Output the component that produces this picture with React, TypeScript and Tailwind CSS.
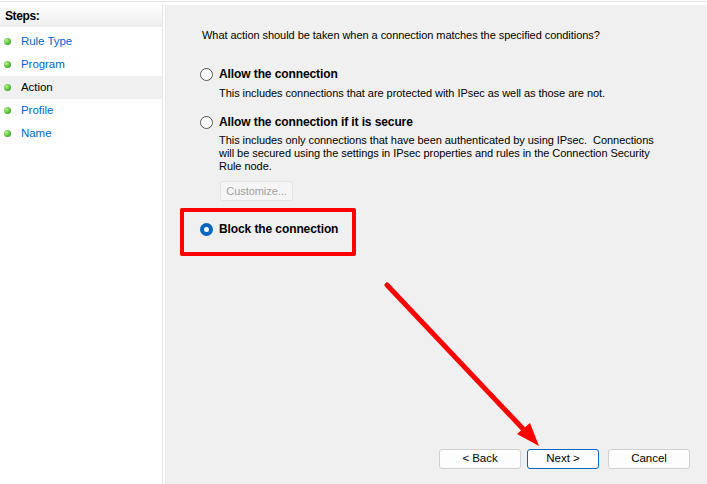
const steps = [
  { label: 'Rule Type', active: false },
  { label: 'Program', active: false },
  { label: 'Action', active: true },
  { label: 'Profile', active: false },
  { label: 'Name', active: false },
];

const Dot = () => (
  <span className="block w-[7px] h-[7px] rounded-full bg-[radial-gradient(circle_at_35%_35%,#b8f08a,#3fae2a_70%)]" />
);

const Radio = ({ checked }: { checked?: boolean }) =>
  checked ? (
    <span className="flex items-center justify-center w-[13px] h-[13px] rounded-full bg-[#0067c0]">
      <span className="block w-[5px] h-[5px] rounded-full bg-white" />
    </span>
  ) : (
    <span className="block w-[13px] h-[13px] rounded-full border border-[#555] bg-white" />
  );

export default function App() {
  return (
    <div className="relative w-[707px] h-[484px] overflow-hidden bg-white text-[11px] tracking-[-0.05px] font-['Liberation_Sans',Arial,sans-serif] text-black">
      <div className="h-[4px] border-t border-[#e6e6e6] mt-[1px]" />
      <div className="flex h-[479px]">
        {/* left steps panel */}
        <div className="w-[163px] border-r border-[#e3e3e3] bg-white">
          <div className="h-[22px] flex items-center pl-[5px] font-bold text-[12px] bg-gradient-to-b from-white to-[#ededed] tracking-[-0.4px]">
            Steps:
          </div>
          <div className="pt-[3px]">
            {steps.map((s) => (
              <div
                key={s.label}
                className={`h-[23px] flex items-center text-[11.5px] ${s.active ? 'bg-[#f0f0f0] text-black' : 'text-[#0066cc]'}`}
              >
                <span className="w-[21px] pl-[4px] flex items-center">
                  <Dot />
                </span>
                {s.label}
              </div>
            ))}
          </div>
        </div>
        <div className="w-[2px] bg-white" />
        {/* content */}
        <div className="flex-1 bg-[#f0f0f0] border-l border-[#e6e6e6] flex flex-col">
          <p className="pl-[36px] pt-[23px] leading-[15px]">
            What action should be taken when a connection matches the specified conditions?
          </p>

          <div className="pl-[34px]">
            <div className="flex items-center h-[16px] mt-[23px]">
              <span className="w-[19px]"><Radio /></span>
              <span className="font-bold text-[12px] tracking-[-0.1px]">Allow the connection</span>
            </div>
            <p className="pl-[19px] mt-[5px] leading-[13px]">
              This includes connections that are protected with IPsec as well as those are not.
            </p>

            <div className="flex items-center h-[16px] mt-[14px]">
              <span className="w-[19px]"><Radio /></span>
              <span className="font-bold text-[12px] tracking-[-0.1px]">Allow the connection if it is secure</span>
            </div>
            <p className="pl-[19px] mt-[4px] leading-[13px] w-[458px]">
              This includes only connections that have been authenticated by using IPsec.&nbsp; Connections will be secured using the settings in IPsec properties and rules in the Connection Security Rule node.
            </p>
            <div className="pl-[20px] mt-[8px]">
              <button className="w-[73px] h-[20px] rounded-[3px] border border-[#e3e3e3] bg-[#f5f5f5] text-[#a0a0a0] text-[11px]">
                Customize...
              </button>
            </div>

            <div className="flex items-center h-[16px] mt-[20px]">
              <span className="w-[19px]"><Radio checked /></span>
              <span className="font-bold text-[12px] tracking-[-0.1px]">Block the connection</span>
            </div>
          </div>

          <div className="mt-auto mb-[15px] flex justify-end gap-[6px] pr-[17px] text-[11.5px]">
            <button className="w-[82px] h-[20px] rounded-[3px] border border-[#d0d0d0] bg-[#fdfdfd]">&lt; Back</button>
            <button className="w-[72px] h-[20px] rounded-[3px] border border-[#0067c0] bg-[#fdfdfd] mr-[3px]">Next &gt;</button>
            <button className="w-[82px] h-[20px] rounded-[3px] border border-[#d0d0d0] bg-[#fdfdfd]">Cancel</button>
          </div>
        </div>
      </div>

      {/* annotations */}
      <div className="absolute left-[180px] top-[208px] w-[176px] h-[48px] border-[4px] border-[#ff0000] rounded-[2px]" />
      <svg className="absolute left-0 top-0" width="707" height="484">
        <line x1="387" y1="285" x2="526" y2="432" stroke="#ff0000" strokeWidth="5" strokeLinecap="round" />
        <polygon points="539,446 517,434 530,423" fill="#ff0000" />
      </svg>
    </div>
  );
}
